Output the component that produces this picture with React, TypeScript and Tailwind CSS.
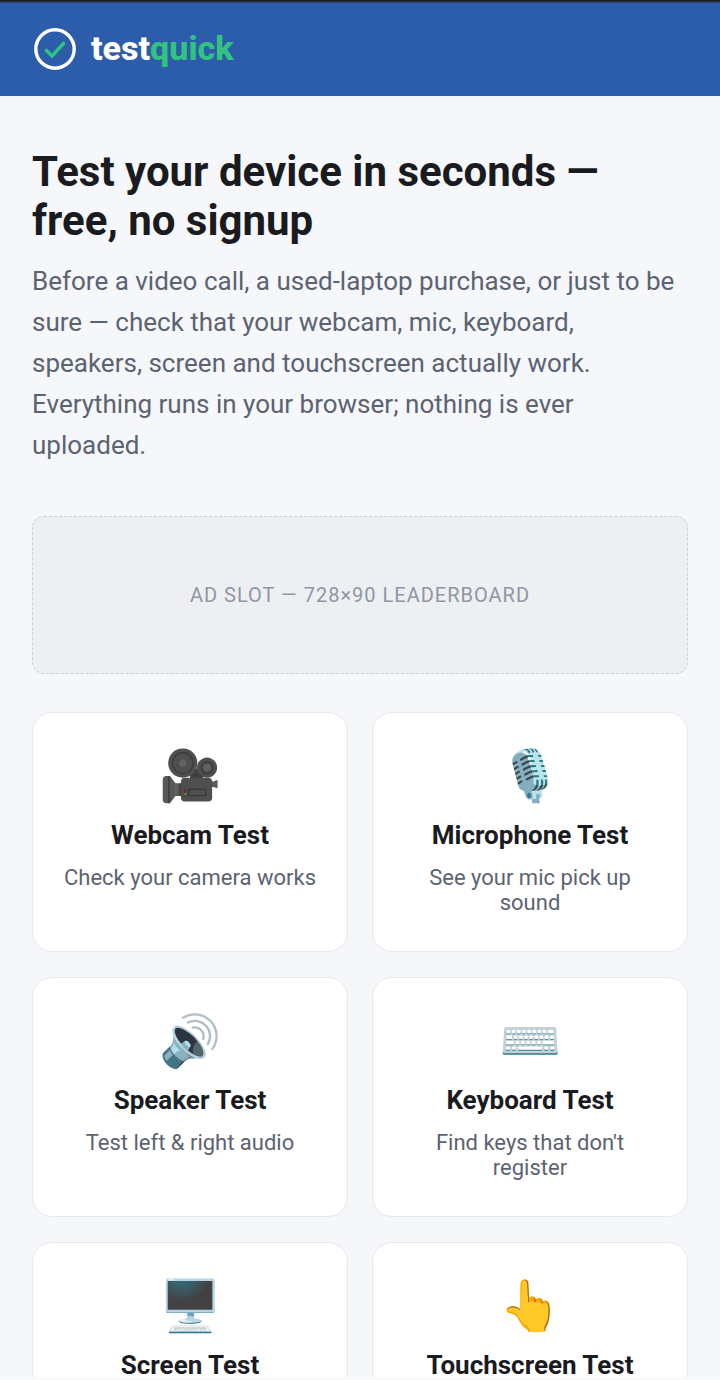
type Test = { icon: string; title: string; text?: string; href: string };

const tests: Test[] = [
  { icon: '🎥', title: 'Webcam Test', text: 'Check your camera works', href: '#webcam' },
  { icon: '🎙️', title: 'Microphone Test', text: 'See your mic pick up sound', href: '#microphone' },
  { icon: '🔊', title: 'Speaker Test', text: 'Test left & right audio', href: '#speaker' },
  { icon: '⌨️', title: 'Keyboard Test', text: "Find keys that don't register", href: '#keyboard' },
  { icon: '🖥️', title: 'Screen Test', href: '#screen' },
  { icon: '👆', title: 'Touchscreen Test', href: '#touchscreen' },
];

function Logo() {
  return (
    <svg viewBox="0 0 42 42" className="size-[42px]" fill="none" aria-hidden="true">
      <circle cx="21" cy="21" r="19.2" stroke="#ffffff" strokeWidth="3.4" />
      <path d="M11.5 21.5 18 28 30.5 14.5" stroke="#34c280" strokeWidth="3.4" />
    </svg>
  );
}

function TestCard({ icon, title, text, href }: Test) {
  return (
    <a
      href={href}
      className="flex min-h-[240px] flex-col items-center rounded-[20px] border border-[#e6e8ed] bg-white px-7 pt-8 pb-9 text-center"
    >
      <span className="text-[50px] leading-[62px]" aria-hidden="true">{icon}</span>
      <h2 className="mt-4 text-[26px] leading-6 font-bold text-[#1a1b1e]">{title}</h2>
      {text && <p className="mt-[18px] text-[22px] leading-[25px] text-[#5c6370]">{text}</p>}
    </a>
  );
}

export default function App() {
  return (
    <div className="flex h-screen flex-col bg-[#f5f7fb] font-['Roboto',sans-serif]">
      <div className="h-[3px] shrink-0 bg-linear-to-b from-[#111419] to-[#3c4f6e]" />
      <div className="min-h-0 flex-1 overflow-y-auto [scrollbar-width:none]">
        <header className="bg-[#2c5daa] px-8 pt-[23px] pb-[25px]">
          <a href="#home" className="flex items-center gap-[15px] pl-0.5 text-[34px] leading-[45px] font-extrabold text-white">
            <Logo />
            <span>test<span className="text-[#34c280]">quick</span></span>
          </a>
        </header>
        <main className="px-8 pt-[51px] pb-12">
          <h1 className="text-[42px] leading-[49px] font-bold text-[#1a1b1e]">
            Test your device in seconds — free, no signup
          </h1>
          <p className="mt-4 text-[26px] leading-[41px] text-[#5c6370]">
            Before a video call, a used-laptop purchase, or just to be sure — check that your webcam, mic,
            keyboard, speakers, screen and touchscreen actually work. Everything runs in your browser;
            nothing is ever uploaded.
          </p>
          <aside className="mt-[50px] flex h-[158px] items-center justify-center rounded-xl border border-dashed border-[#cbced6] bg-[#edeff3] text-xl tracking-[1px] text-[#9096a3]">
            AD SLOT — 728×90 LEADERBOARD
          </aside>
          <section className="mt-[38px] grid grid-cols-2 gap-x-6 gap-y-[25px]">
            {tests.map((test) => (
              <TestCard key={test.title} {...test} />
            ))}
          </section>
        </main>
      </div>
      <div className="h-[3px] shrink-0 bg-[#f9fafb]" />
    </div>
  );
}
